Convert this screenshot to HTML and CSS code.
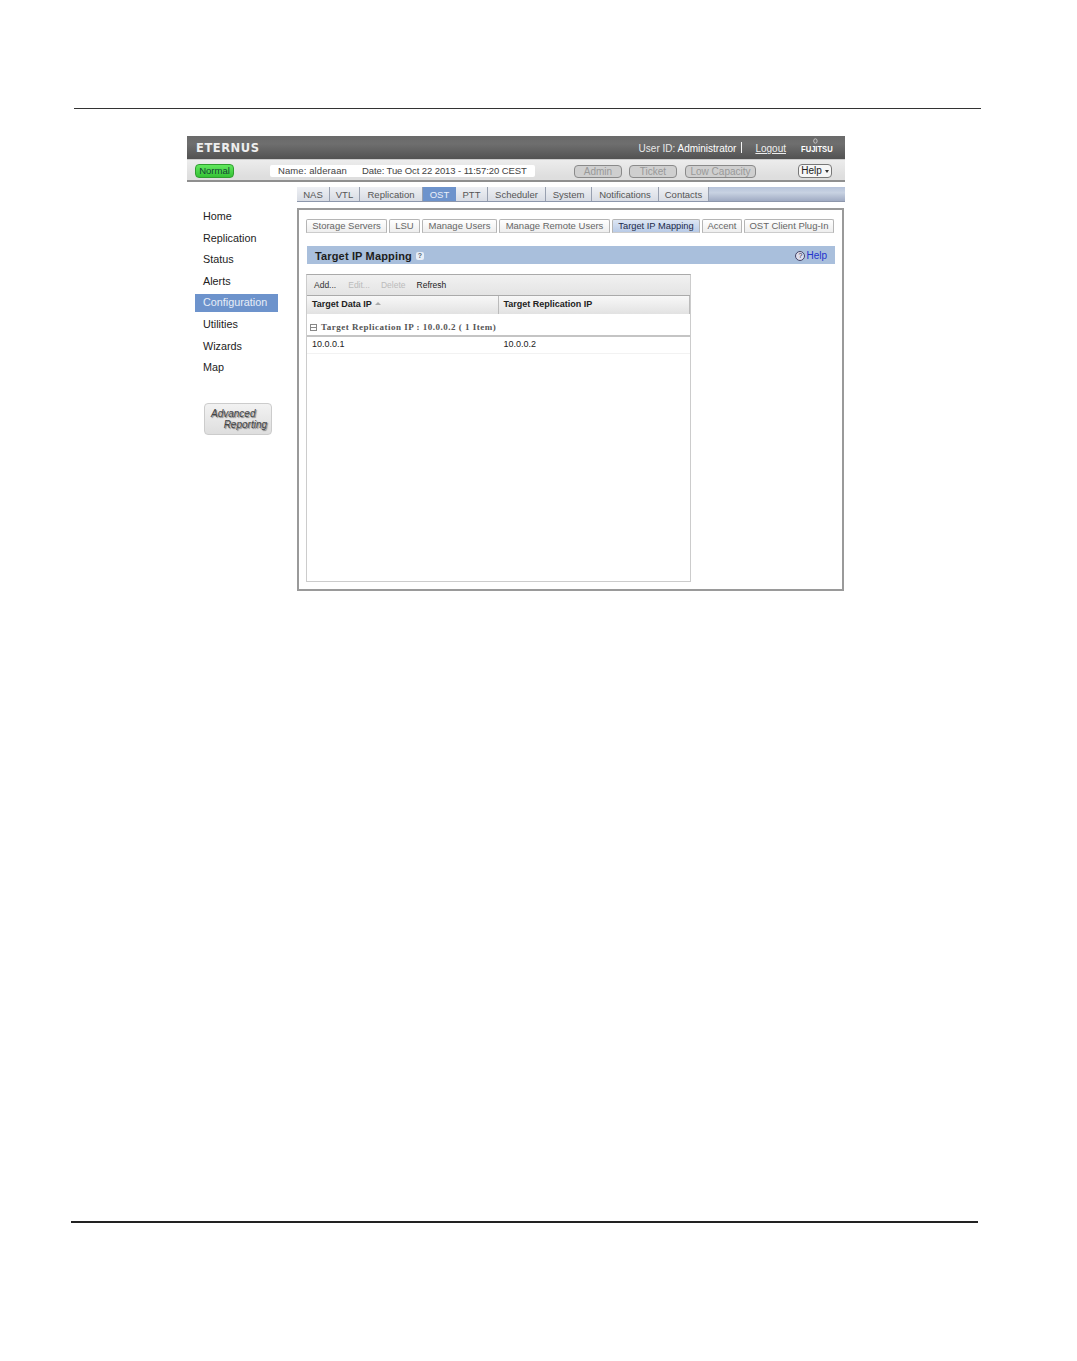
FILE: index.html
```html
<!DOCTYPE html>
<html lang="en">
<head>
<meta charset="utf-8">
<title>Target IP Mapping</title>
<link rel="stylesheet" href="styles.css">
</head>
<body>
<div class="page">
  <div class="rule-top"></div>
  <div class="app">
    <header class="head">
      <span class="brand">ETERNUS</span>
      <span class="user">User ID: <b>Administrator</b></span>
      <span class="sep"></span>
      <a class="logout">Logout</a>
      <span class="fujitsu">FUJITSU<svg class="loop" viewBox="0 0 8 6" width="8" height="6" aria-hidden="true"><circle cx="4" cy="3" r="2.2" fill="none" stroke="#ddd" stroke-width=".8"/></svg></span>
    </header>
    <div class="status">
      <span class="normal">Normal</span>
      <div class="info"><span>Name: alderaan</span><span class="date">Date: Tue Oct 22 2013 - 11:57:20 CEST</span></div>
      <div class="pills"><span class="pill p-admin">Admin</span><span class="pill p-ticket">Ticket</span><span class="pill p-low">Low Capacity</span></div>
      <span class="help-btn">Help <i class="caret"></i></span>
    </div>
    <div class="main">
      <nav class="side">
        <a>Home</a><a>Replication</a><a>Status</a><a>Alerts</a><a class="on">Configuration</a><a>Utilities</a><a>Wizards</a><a>Map</a>
        <div class="adv"><span>Advanced</span><span class="r">Reporting</span></div>
      </nav>
      <div class="right">
        <div class="tabs1">
          <a class="t-nas">NAS</a><a class="t-vtl">VTL</a><a class="t-rep">Replication</a><a class="on t-ost">OST</a><a class="t-ptt">PTT</a><a class="t-sch">Scheduler</a><a class="t-sys">System</a><a class="t-not">Notifications</a><a class="t-con">Contacts</a>
        </div>
        <section class="panel">
          <div class="tabs2">
            <a class="w-ss">Storage Servers</a><a class="w-lsu">LSU</a><a class="w-mu">Manage Users</a><a class="w-mr">Manage Remote Users</a><a class="on w-ti">Target IP Mapping</a><a class="w-ac">Accent</a><a class="w-op">OST Client Plug-In</a>
          </div>
          <div class="title">
            <h1>Target IP Mapping</h1><span class="q">?</span>
            <span class="title-help"><span class="round">?</span>Help</span>
          </div>
          <div class="grid">
            <div class="tools"><span>Add...</span><span class="dis e">Edit...</span><span class="dis d">Delete</span><span class="rf">Refresh</span></div>
            <div class="cols"><div class="col">Target Data IP <i class="up"></i></div><div class="col">Target Replication IP</div></div>
            <div class="group"><i class="minus"></i>Target Replication IP : 10.0.0.2 ( 1 Item)</div>
            <div class="row"><div>10.0.0.1</div><div>10.0.0.2</div></div>
          </div>
        </section>
      </div>
    </div>
  </div>
  <div class="rule-bottom"></div>
</div>
</body>
</html>
```
FILE: styles.css
```css
* { box-sizing: border-box; }
html, body { margin: 0; background: #fff; }
body { font-family: "Liberation Sans", Arial, sans-serif; font-size: 10px; color: #222; }
.page { height: 1361px; padding-top: 108px; overflow: hidden; }
.rule-top { height: 1px; width: 907px; margin-left: 74px; background: #333; }
.rule-bottom { height: 2px; width: 907px; margin: 630px 0 0 71px; background: #222; }
.app { width: 658px; margin: 27px 0 0 187px; }

.head { height: 23px; display: flex; align-items: center; color: #fff;
  background: linear-gradient(#6a6a6a, #6e6e6e 35%, #525252); }
.brand { margin-left: 9px; font: bold 11.5px "DejaVu Sans", sans-serif; letter-spacing: .55px; color: #eee; }
.user { margin-left: auto; font-size: 10px; color: #e8e8e8; position: relative; top: 1px; }
.user b { font-weight: normal; color: #fff; }
.sep { width: 1px; height: 11px; background: #f4f4f4; margin-left: 5px; }
.logout { margin-left: 13px; color: #eee; font-size: 10px; text-decoration: underline; position: relative; top: 1px; }
.fujitsu { display: inline-block; width: 31px; margin: 0 13px 0 15px; font-size: 9.5px; font-weight: bold; color: #fff; white-space: nowrap;
  position: relative; top: 1px; transform: scaleX(.8); transform-origin: left center; }
.loop { position: absolute; left: 14px; top: -5px; }

.status { height: 23px; display: flex; align-items: center; padding: 2px 13px 0 8px;
  background: linear-gradient(#ececec, #dedede 85%); border-bottom: 2px solid #8f8f8f; border-top: 1px solid #ccc; }
.normal { width: 39px; height: 14px; border-radius: 4px; border: 1px solid #2f9e2f; background: linear-gradient(#62e85e, #35c235);
  font-size: 9.5px; line-height: 12px; text-align: center; color: #143; }
.info { display: flex; gap: 15px; width: 265px; height: 12px; padding-left: 8px; background: #fff;
  line-height: 12px; font-size: 9.5px; color: #444; letter-spacing: .1px; border-radius: 2px; margin-left: 36px; white-space: nowrap; }
.date { letter-spacing: -.1px; }
.pills { display: flex; margin-left: 39px; gap: 7px; }
.pill { height: 13px; border: 1px solid #8a8a8a; border-radius: 4px; background: #cfcfcf; color: #999; font-size: 10px;
  line-height: 11px; text-align: center; }
.p-admin { width: 48px; } .p-ticket { width: 48px; } .p-low { width: 71px; margin-left: 1px; }
.help-btn { margin-left: auto; width: 34px; height: 14px; border: 1px solid #777; border-radius: 4px; background: #f6f6f6;
  font-size: 10px; line-height: 12px; text-align: center; color: #222; }
.caret { display: inline-block; border: 2px solid transparent; border-top: 3px solid #333; border-bottom: 0; vertical-align: 1px; }

.main { display: flex; }
.side { width: 110px; padding: 26px 0 0 8px; }
.side a { display: block; width: 83px; height: 18px; margin-bottom: 3.6px; padding-left: 8px; line-height: 17px; font-size: 10.8px; color: #222; }
.side a.on { background: #6d93cc; color: #e8eef8; }
.adv { width: 68px; height: 32px; margin: 26px 0 0 9px; padding: 4px 4px 0 6px; border: 1px solid #ccc; border-radius: 4px;
  background: linear-gradient(#f2f2f2, #dedede); font-size: 10px; line-height: 11px; font-style: italic;
  color: #444; text-shadow: 1px 1px 1px #777; display: flex; flex-direction: column; }
.adv .r { align-self: flex-end; }

.right { width: 548px; margin-top: 5px; }
.tabs1 { height: 15px; display: flex; background: linear-gradient(#b6c3da, #c8d2e2 40%, #a0abc3); border-bottom: 1px solid #8d97ac; }
.tabs1 a { border-right: 1px solid #98a0b0; text-align: center; line-height: 15px; font-size: 9.5px; color: #555; background: linear-gradient(#eef0f4, #d8dce4); }
.tabs1 a.on { background: #6d93cc; color: #eaf0fa; border-right: 0; }
.t-nas { width: 33px; } .t-vtl { width: 30px; } .t-rep { width: 63px; } .t-ost { width: 33px; } .t-ptt { width: 32px; }
.t-sch { width: 58px; } .t-sys { width: 46px; } .t-not { width: 67px; } .t-con { width: 50px; }

.panel { width: 547px; height: 383px; margin-top: 6px; padding: 9px 8px 0 7px; border: 2px solid #9a9a9a; }
.tabs2 { display: flex; gap: 2px; height: 14px; }
.tabs2 a { height: 14px; border: 1px solid #b5b5b5; border-bottom: 1px solid #ccc; border-radius: 2px 2px 0 0; background: linear-gradient(#fff, #eee);
  text-align: center; line-height: 12px; font-size: 9.5px; color: #666; white-space: nowrap; }
.tabs2 a.on { background: linear-gradient(#dde6f4, #b9cbe7); color: #1c2a4a; font-size: 9.3px; }
.w-ss { width: 81px; } .w-lsu { width: 31px; } .w-mu { width: 75px; } .w-mr { width: 111px; } .w-ti { width: 88px; }
.w-ac { width: 40px; } .w-op { width: 90px; }
.title { display: flex; align-items: center; height: 18px; margin: 13px 0 0 1px; width: 528px; padding: 1px 8px 0; background: #a9bfdc; }
.title h1 { margin: 0; font-size: 11px; font-weight: bold; color: #1d1d1d; letter-spacing: .15px; }
.q { width: 8px; height: 8px; margin-left: 4px; background: #e8eef6; border-radius: 2px; font-size: 7px; line-height: 8px; text-align: center; font-weight: bold; color: #567; }
.title-help { margin-left: auto; display: flex; align-items: center; gap: 1px; color: #2233cc; font-size: 10px; }
.round { width: 10px; height: 10px; border: 1px solid #446; border-radius: 50%; background: #dde; color: #224; font-size: 7px; line-height: 8px; text-align: center; }

.grid { width: 385px; height: 308px; margin-top: 10px; border: 1px solid #ccc; border-top: 1px solid #aaa; }
.tools { height: 21px; padding-left: 7px; display: flex; align-items: center; background: linear-gradient(#f1f1f1, #e4e4e4); font-size: 8.5px; color: #333; border-bottom: 1px solid #aaa; }
.dis { color: #bbb; }
.e { margin-left: 12px; } .d { margin-left: 11px; } .rf { margin-left: 11px; color: #222; }
.cols { display: flex; height: 18px; background: linear-gradient(#f8f8f8, #e2e2e2); }
.col { width: 192px; padding-left: 5px; line-height: 16px; font-size: 9px; font-weight: bold; color: #222; border-right: 1px solid #bbb; }
.up { display: inline-block; border: 3px solid transparent; border-bottom: 3px solid #aaa; border-top: 0; margin-left: 1px; vertical-align: 2px; }
.group { height: 23px; display: flex; align-items: center; padding: 5px 0 0 3px; border-bottom: 2px solid #c4c4c4;
  font: bold 9px "Liberation Serif", "DejaVu Serif", serif; letter-spacing: .5px; color: #555; }
.minus { width: 7px; height: 7px; margin-right: 4px; border: 1px solid #888; background: linear-gradient(#888, #888) center / 5px 1px no-repeat; }
.row { display: flex; height: 17px; line-height: 15px; font-size: 9px; color: #222; border-bottom: 1px solid #f2f2f2; }
.row div { width: 192px; padding-left: 5px; }
```
